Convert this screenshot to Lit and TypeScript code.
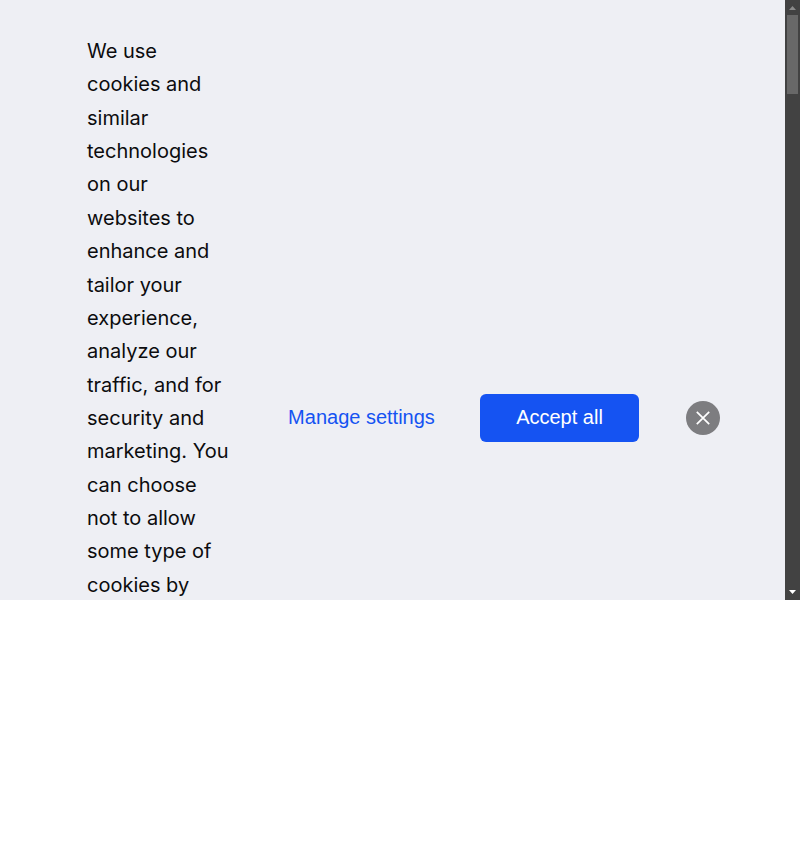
import { LitElement, html, css } from "lit";
import { customElement } from "lit/decorators.js";

const LINES = [
  "We use", "cookies and", "similar", "technologies", "on our", "websites to",
  "enhance and", "tailor your", "experience,", "analyze our", "traffic, and for",
  "security and", "marketing. You", "can choose", "not to allow", "some type of", "cookies by",
];

@customElement("app-root")
export class AppRoot extends LitElement {
  static styles = css`
    :host { display: block; min-height: 100vh; background: #fff; font-family: "Liberation Sans", Arial, sans-serif; font-size: 20px; }
    .banner { display: flex; background: #eeeff4; }
    .content { flex: 1; display: grid; grid-template-columns: 144px 1fr 159px 47px 34px; align-items: start; padding: 35px 65px 0 87px; }
    .message { margin: 0 0 -2px; font-family: Inter, sans-serif; font-size: 20px; line-height: 1.668; color: #0c0c0e; white-space: nowrap; }
    button { font: inherit; border: 0; padding: 0 0 2px; margin: 359px 0 0; height: 48px; cursor: pointer; }
    .manage { background: none; color: #1553f2; justify-self: center; white-space: nowrap; margin-left: 12px; }
    .accept { background: #1553f2; color: #fff; border-radius: 6px; }
    .close { grid-column: 5; background: none; padding: 0; display: flex; align-items: center; }
    .close svg { display: block; width: 34px; height: 34px; }
    .scroll { width: 15px; background: #424242; display: flex; flex-direction: column; align-items: center; }
    .scroll svg { display: block; width: 15px; height: 15px; }
    .thumb { width: 11px; height: 79px; background: #686868; }
    .space { flex: 1; }
  `;

  render() {
    return html`
      <section class="banner" aria-label="Cookie consent">
        <div class="content">
          <p class="message">${LINES.map((line, i) => html`${i ? html`<br />` : ""}${line}`)}</p>
          <button class="manage">Manage settings</button>
          <button class="accept">Accept all</button>
          <button class="close" aria-label="Close">
            <svg viewBox="0 0 34 34"><circle cx="17" cy="17" r="17" fill="#7d7d80" /><path d="M10.8 10.8 23.2 23.2M23.2 10.8 10.8 23.2" stroke="#fff" stroke-width="1.7" /></svg>
          </button>
        </div>
        <div class="scroll" aria-hidden="true">
          <svg viewBox="0 0 15 15"><path d="M4 10 7.5 6 11 10Z" fill="#8a8a8a" /></svg>
          <div class="thumb"></div>
          <div class="space"></div>
          <svg viewBox="0 0 15 15"><path d="M4 5H11L7.5 9Z" fill="#fff" /></svg>
        </div>
      </section>
    `;
  }
}
